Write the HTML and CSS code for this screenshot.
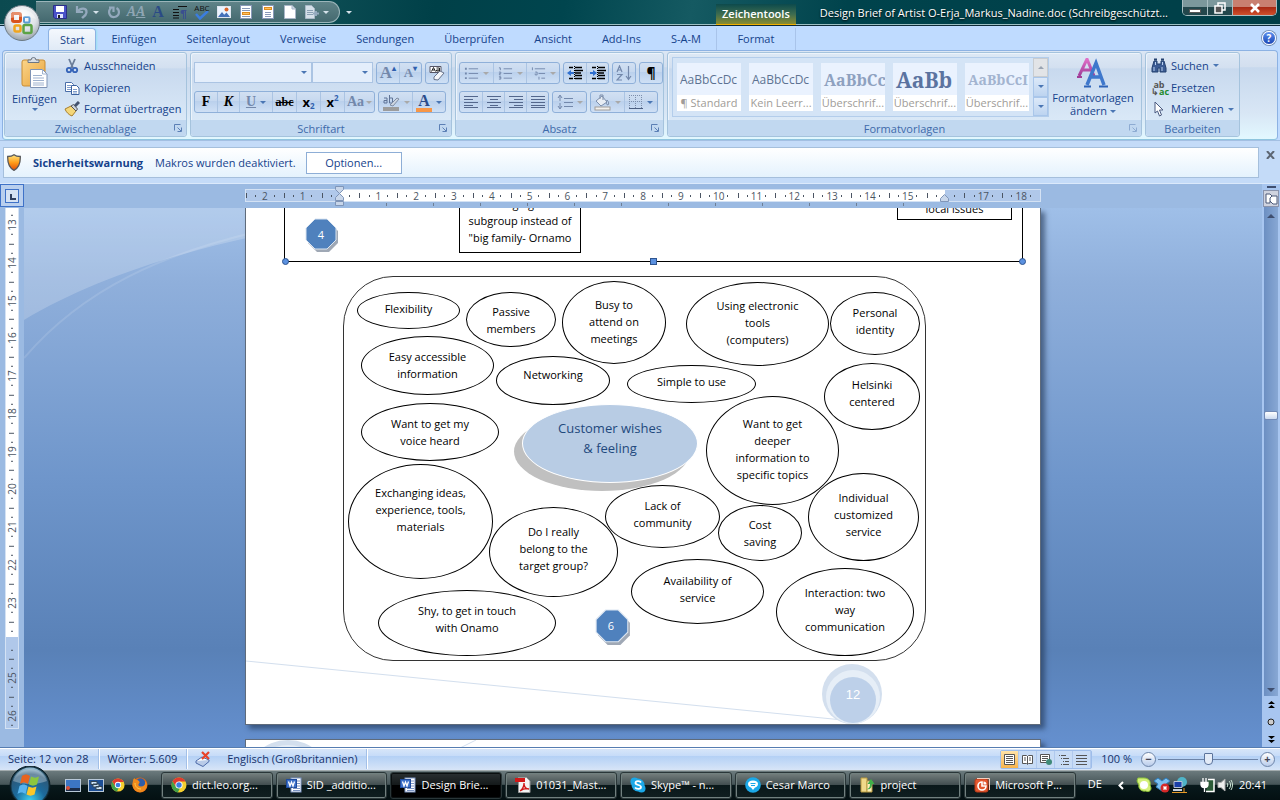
FILE: index.html
```html
<!DOCTYPE html>
<html lang="de">
<head>
    <meta charset="UTF-8">
    <meta name="viewport" content="width=device-width, initial-scale=1.0">
    <title>Design Brief of Artist O-Erja_Markus_Nadine.doc</title>
    <link rel="stylesheet" href="styles.css">
</head>
<body>
    <!-- shared icons -->
    <svg class="defs" width="0" height="0" aria-hidden="true">
        <defs>
            <linearGradient id="gBlue" x1="0" y1="0" x2="0" y2="1"><stop offset="0" stop-color="#9cc4f5"/><stop offset="1" stop-color="#2d63b8"/></linearGradient>
            <linearGradient id="gPink" x1="0" y1="0" x2="0" y2="1"><stop offset="0" stop-color="#e070c8"/><stop offset="1" stop-color="#a03c98"/></linearGradient>
            <linearGradient id="gClip" x1="0" y1="0" x2="1" y2="1"><stop offset="0" stop-color="#fbd58a"/><stop offset="1" stop-color="#e8a33c"/></linearGradient>
            <linearGradient id="gShield" x1="0" y1="0" x2="0" y2="1"><stop offset="0" stop-color="#ffe680"/><stop offset=".5" stop-color="#ff9e1b"/><stop offset="1" stop-color="#e04a08"/></linearGradient>
            <radialGradient id="gOffice" cx=".5" cy=".3" r=".75"><stop offset="0" stop-color="#ffffff"/><stop offset=".55" stop-color="#dfe3e8"/><stop offset="1" stop-color="#8d979f"/></radialGradient>
            <radialGradient id="gOrb" cx=".5" cy=".9" r=".9"><stop offset="0" stop-color="#3fd0f0"/><stop offset=".45" stop-color="#1c6a9c"/><stop offset=".8" stop-color="#2c5878"/><stop offset="1" stop-color="#9ec4d8"/></radialGradient>
        </defs>
        <symbol id="i-word" viewBox="0 0 16 16">
            <rect x="5" y="1" width="10" height="14" fill="#fff" stroke="#7c95c4"/>
            <path d="M11 4h3M11 6.500h3M11 9h3M7 11.500h7M7 13.500h7" stroke="#7c95c4"/>
            <rect x=".5" y="2.500" width="10" height="8" fill="#3b6fc8" stroke="#1f4b9c"/>
            <path d="M2.500 4.500l1.500 4.500 1.500-4 1.500 4 1.500-4.500" fill="none" stroke="#fff" stroke-width="1.300"/>
        </symbol>
        <symbol id="i-chrome" viewBox="0 0 16 16">
            <circle cx="8" cy="8" r="7.500" fill="#f5cf2e"/>
            <path d="M8 .5A7.500 7.500 0 0 1 14.600 4.500H8L4.900 9.700 1.500 4.300A7.500 7.500 0 0 1 8 .5z" fill="#df3b2f"/>
            <path d="M1.500 4.300L4.900 9.700l3.900 1.800-2 4A7.500 7.500 0 0 1 1.500 4.300z" fill="#43a047"/>
            <circle cx="8" cy="8" r="3.600" fill="#fff"/><circle cx="8" cy="8" r="2.700" fill="#3b7de0"/>
        </symbol>
        <symbol id="i-firefox" viewBox="0 0 16 16">
            <circle cx="8" cy="8" r="7.500" fill="#e66a12"/>
            <circle cx="8.500" cy="6" r="4.700" fill="#2f5da8"/>
            <path d="M1 4C1 2 2 1.500 2.500 1c.5 1.500 1.500 2 3 2C7 4 8.500 5 7 6.500c-1 1-1 3 2 3s5-2 4-5c2 1 2.500 4 1 7-3 5-10 5-13-1C0 8 .5 6 1 4z" fill="#f08a1c"/>
            <path d="M3 6c0 4 3 6 6 6" fill="none" stroke="#ffd04a"/>
        </symbol>
        <symbol id="i-list" viewBox="0 0 16 14">
            <path d="M5 2.500h10M5 7.500h10M5 12.500h10" stroke="currentColor"/><path d="M1 2.500h2M1 7.500h2M1 12.500h2" stroke="currentColor" stroke-width="2"/>
        </symbol>
        <symbol id="i-numlist" viewBox="0 0 16 14">
            <path d="M6 2.500h9M6 7.500h9M6 12.500h9" stroke="currentColor"/>
            <path d="M1 1.500h1.500V4M1 6h2v1.500H1.500V9H3M1 11h2v2.500H1M1.500 12H3" fill="none" stroke="currentColor"/>
        </symbol>
        <symbol id="i-multilist" viewBox="0 0 16 14">
            <path d="M4 2.500h11M8 7.500h7M11 12.500h4M1.500 1v3M4.500 6h2v3h-2V7.500M8.500 11v3" fill="none" stroke="currentColor"/>
        </symbol>
        <symbol id="i-outdent" viewBox="0 0 16 14">
            <path d="M2 1.500h4M8 1.500h7M2 12.500h4M8 12.500h7M8 4.500h8M8 7h6M8 9.500h7" stroke="#000" stroke-width="1.500"/><path d="M7.500 0v14" stroke="#000" stroke-dasharray="1 1"/><path d="M0 7l4-3v2h3v2H4v2z" fill="#2f6fd0"/>
        </symbol>
        <symbol id="i-indent" viewBox="0 0 16 14">
            <path d="M2 1.500h4M8 1.500h7M2 12.500h4M8 12.500h7M8 4.500h8M8 7h6M8 9.500h7" stroke="#000" stroke-width="1.500"/><path d="M7.500 0v14" stroke="#000" stroke-dasharray="1 1"/><path d="M7 7L3 4v2H0v2h3v2z" fill="#2f6fd0"/>
        </symbol>
        <symbol id="i-left" viewBox="0 0 14 12"><path d="M0 .5h14M0 3.500h9M0 6.500h14M0 9.500h9M0 11.500h14" stroke="currentColor"/></symbol>
        <symbol id="i-center" viewBox="0 0 14 12"><path d="M0 .5h14M3 3.500h8M0 6.500h14M3 9.500h8M0 11.500h14" stroke="currentColor"/></symbol>
        <symbol id="i-right" viewBox="0 0 14 12"><path d="M0 .5h14M5 3.500h9M0 6.500h14M5 9.500h9M0 11.500h14" stroke="currentColor"/></symbol>
        <symbol id="i-justify" viewBox="0 0 14 12"><path d="M0 .5h14M0 3.500h14M0 6.500h14M0 9.500h14M0 11.500h14" stroke="currentColor"/></symbol>
        <symbol id="i-launch" viewBox="0 0 8 8"><path d="M.5 6.500v-6h6M3.500 4v-.5M4 4l3 3M7.500 3.500v4h-4" fill="none" stroke="currentColor"/></symbol>
    </svg>

    <header class="titlebar">
        <button class="office" aria-label="Office">
            <svg width="36" height="36" viewBox="0 0 36 36">
                <circle cx="18" cy="18" r="17.500" fill="url(#gOffice)" stroke="#6b7a84"/>
                <g fill="none" stroke-width="3">
                    <rect x="8.500" y="8.500" width="8" height="8" rx="1.500" stroke="#d9531e"/>
                    <rect x="20" y="12" width="5.500" height="5.500" rx="1" stroke="#5b9bd5" stroke-width="2"/>
                    <rect x="10.500" y="20.500" width="6" height="6" rx="1.500" stroke="#f0a51e" stroke-width="2.500"/>
                    <rect x="19.500" y="20" width="8" height="8" rx="1.500" stroke="#5ba345" stroke-width="2.500"/>
                </g>
                <path d="M4 14a15 15 0 0 1 28 0c-8-3-20-3-28 0z" fill="#fff" opacity=".35"/>
            </svg>
        </button>
        <div class="qat">
            <button aria-label="Speichern"><svg width="14" height="14" viewBox="0 0 14 14"><path d="M.5.5h13v13H2l-1.500-1.500z" fill="#4a52c8" stroke="#2b2f86"/><rect x="3" y="1" width="8" height="6" fill="#fff"/><rect x="4" y="9" width="6" height="4" fill="#dfe3ff"/><rect x="5" y="10" width="2" height="3" fill="#222"/></svg></button>
            <button class="wide" aria-label="Rückgängig"><svg width="14" height="14" viewBox="0 0 14 14"><path d="M2 1v6h6M2.500 6.500C6 2 12 3 11.500 7.500 11 11 8 12 7 13" fill="none" stroke="#94a9bd" stroke-width="2.200"/></svg><i class="arrow pale"></i></button>
            <button aria-label="Wiederholen"><svg width="14" height="14" viewBox="0 0 14 14"><path d="M4 3C0 7 3 12.500 7.500 12 13 11 13 5 9.500 3M2 2.500h4.500V7" fill="none" stroke="#94a9bd" stroke-width="2.200"/></svg></button>
            <button class="serif dim" aria-label="Formatvorlage">A<u>A</u></button>
            <button class="serif navy" aria-label="Schriftart">A</button>
            <button aria-label="Absatz"><svg width="14" height="14" viewBox="0 0 14 14"><path d="M5 1.500h9M0 4.500h6M0 7.500h6M0 10.500h6M0 13h6" stroke="#111"/><path d="M10.500 5v9M12.500 5v9M9 5.500h4.500" stroke="#3a4f8f"/><circle cx="9.500" cy="7" r="2" fill="#3a4f8f"/></svg></button>
            <button class="abc" aria-label="Rechtschreibung"><span>ABC</span><svg width="14" height="9" viewBox="0 0 14 9"><path d="M1 3l4 4.500L13 0" fill="none" stroke="#3b7de0" stroke-width="2.500"/></svg></button>
            <button aria-label="Grafik"><svg width="14" height="14" viewBox="0 0 14 14"><rect x=".5" y="1.500" width="13" height="11" fill="#eaf3ff" stroke="#dfe6ef"/><path d="M1 12l4-5 4 5zM7 10l2.500-2.500L13 12H8z" fill="#4470b8"/><circle cx="9.500" cy="4.500" r="2" fill="#d9642a"/></svg></button>
            <button aria-label="Kopfzeile"><svg width="12" height="14" viewBox="0 0 12 14"><rect x=".5" y=".5" width="11" height="13" fill="#fff" stroke="#8898b8"/><path d="M2 3.500h8M2 5.500h8M2 11.500h8" stroke="#8898b8"/><rect x="2.500" y="7.500" width="7" height="2" fill="#ffc060" stroke="#e08c20"/></svg></button>
            <button aria-label="Fußzeile"><svg width="12" height="14" viewBox="0 0 12 14"><rect x=".5" y=".5" width="11" height="13" fill="#fff" stroke="#8898b8"/><rect x="2.500" y="2.500" width="7" height="2" fill="#ffc060" stroke="#e08c20"/><path d="M3 7.500h6M3 9.500h6M3 11.500h6" stroke="#8898b8"/></svg></button>
            <button aria-label="Neu"><svg width="12" height="14" viewBox="0 0 12 14"><path d="M.5.500h7.500l3.500 3.500v9.500H.5z" fill="#fff" stroke="#a9b6c8"/><path d="M8 .5V4h3.500" fill="#cdd8e6" stroke="#a9b6c8"/></svg></button>
            <button class="wide" aria-label="Umbruch"><svg width="14" height="14" viewBox="0 0 14 14"><path d="M.5.500h6l3 3v10h-9z" fill="#d5dfe8" stroke="#a9b9c8"/><path d="M2 5.500h6M2 7.500h6M2 9.500h6" stroke="#8aa0b4"/><path d="M8 8.500h6M11 6v5" stroke="#94a9bd" stroke-width="2"/></svg><i class="arrow pale"></i></button>
        </div>
        <button class="customize" aria-label="Symbolleiste anpassen"><i class="arrow pale"></i></button>
        <h1 class="doc-title">Design Brief of Artist O-Erja_Markus_Nadine.doc (Schreibgeschützt...</h1>
        <div class="window-buttons">
            <button aria-label="Minimieren"><svg width="12" height="12" viewBox="0 0 12 12"><rect x=".5" y="7.500" width="11" height="3" fill="#fff" stroke="#555"/></svg></button>
            <button aria-label="Wiederherstellen"><svg width="12" height="12" viewBox="0 0 12 12"><rect x="4" y="1" width="7" height="7" fill="none" stroke="#fff" stroke-width="1.500"/><rect x="1" y="4" width="7" height="7" fill="#555" stroke="#fff" stroke-width="1.500"/></svg></button>
            <button class="close" aria-label="Schließen"><svg width="12" height="10" viewBox="0 0 12 10"><path d="M2 1l8 8M10 1L2 9" stroke="#fff" stroke-width="2.600"/></svg></button>
        </div>
    </header>

    <nav class="tabs">
        <button class="tab active">Start</button>
        <button class="tab">Einfügen</button>
        <button class="tab">Seitenlayout</button>
        <button class="tab">Verweise</button>
        <button class="tab">Sendungen</button>
        <button class="tab">Überprüfen</button>
        <button class="tab">Ansicht</button>
        <button class="tab">Add-Ins</button>
        <button class="tab">S-A-M</button>
        <button class="tab context"><span class="context-title">Zeichentools</span>Format</button>
        <button class="help" aria-label="Hilfe">?</button>
    </nav>

    <section class="ribbon">
        <div class="group clipboard">
            <div class="group-body">
                <button class="big">
                    <svg width="28" height="32" viewBox="0 0 28 32"><rect x="1" y="3" width="23" height="26" rx="2" fill="url(#gClip)" stroke="#c98d34"/><path d="M7 5.500V3h3a2.500 2.500 0 0 1 5 0h3v2.500z" fill="#d8dde4" stroke="#6b7684"/><path d="M9.500 12.500h12l4.500 4.500v13.500H9.500z" fill="#fff" stroke="#7f93b5"/><path d="M21.500 12.500V17H26M12 18.500h9M12 21h11M12 23.500h11M12 26h11M12 28h11" fill="none" stroke="#9fb2cf"/></svg>
                    <span>Einfügen</span><i class="arrow"></i>
                </button>
                <div class="stack">
                    <button class="small"><svg width="16" height="16" viewBox="0 0 16 16"><path d="M5 1l4 9M11 1L7 10" stroke="#6b7d99" stroke-width="1.800"/><circle cx="5" cy="12" r="2.200" fill="none" stroke="#3563b8" stroke-width="1.800"/><circle cx="11" cy="12" r="2.200" fill="none" stroke="#3563b8" stroke-width="1.800"/></svg>Ausschneiden</button>
                    <button class="small"><svg width="16" height="16" viewBox="0 0 16 16"><path d="M1.500 2.500h6l2 2v7h-8z" fill="#fff" stroke="#4a6ea8"/><path d="M3 5.500h4M3 7.500h4M3 9.500h4" stroke="#7f9dcc"/><path d="M7.500 5.500h5l2.500 2.500v6.500H7.500z" fill="#fff" stroke="#3b62a0"/><path d="M9 9.500h4M9 11.500h4M9 13h4" stroke="#7f9dcc"/></svg>Kopieren</button>
                    <button class="small"><svg width="16" height="16" viewBox="0 0 16 16"><path d="M1 8l6-3 5 5-4 5C5 14 2 11 1 8z" fill="#f4d77a" stroke="#a87e2b"/><path d="M7 5l5 5 1.500-2L9.500 3.500z" fill="#cfd6df" stroke="#555"/><path d="M11 5l4-4" stroke="#44536e" stroke-width="3"/></svg>Format übertragen</button>
                </div>
            </div>
            <div class="group-title">Zwischenablage<svg width="8" height="8"><use href="#i-launch"/></svg></div>
        </div>

        <div class="group font">
            <div class="group-body rows">
                <div class="row">
                    <span class="combos">
                        <span class="combo family"><select aria-label="Schriftart"><option></option></select></span>
                        <span class="combo size"><select aria-label="Schriftgrad"><option></option></select></span>
                    </span>
                    <span class="btns"><button class="serif gray big-a" aria-label="Vergrößern">A<sup>▴</sup></button><button class="serif gray small-a" aria-label="Verkleinern">A<sup>▾</sup></button></span>
                    <span class="btns"><button aria-label="Formatierung löschen"><svg width="18" height="16" viewBox="0 0 18 16"><path d="M2 1.500h11v6H2z" fill="#fff" stroke="#556"/><path d="M3.500 6.500l2-4 2 4M4.500 5h2M8.500 3h3v3h-3V5h3" fill="none" stroke="#222"/><path d="M6 12l6-6 4 2-6 7-4-.5z" fill="#f4f6fa" stroke="#66728a"/></svg></button></span>
                </div>
                <div class="row">
                    <span class="btns">
                        <button class="serif"><b>F</b></button><button class="serif"><b><i>K</i></b></button><button class="serif gray split"><u>U</u><i class="arrow"></i></button><button class="serif strike"><s>abc</s></button><button class="sans">x<sub>2</sub></button><button class="sans">x<sup>2</sup></button><button class="serif gray aa">Aa<i class="arrow off"></i></button>
                    </span>
                    <span class="btns">
                        <button class="split" aria-label="Hervorheben"><svg width="18" height="17" viewBox="0 0 18 17"><path d="M2 4h3v5H2V6.500h3M7.500 1v8h3V4h-3" fill="none" stroke="#5f7396"/><path d="M8 11l7-7 2 1-6 7z" fill="#cdd5e0" stroke="#7f8da5"/><rect x="1" y="13" width="16" height="4" fill="#9c9c9c"/></svg><i class="arrow off"></i></button><button class="split color" aria-label="Schriftfarbe"><span class="serif">A</span><i class="arrow"></i></button>
                    </span>
                </div>
            </div>
            <div class="group-title">Schriftart<svg width="8" height="8"><use href="#i-launch"/></svg></div>
        </div>

        <div class="group para">
            <div class="group-body rows">
                <div class="row">
                    <span class="btns gray"><button class="split" aria-label="Aufzählung"><svg width="15" height="14"><use href="#i-list"/></svg><i class="arrow off"></i></button><button class="split" aria-label="Nummerierung"><svg width="15" height="14"><use href="#i-numlist"/></svg><i class="arrow off"></i></button><button class="split" aria-label="Liste"><svg width="15" height="14"><use href="#i-multilist"/></svg><i class="arrow off"></i></button></span>
                    <span class="btns"><button aria-label="Einzug verkleinern"><svg width="16" height="14"><use href="#i-outdent"/></svg></button><button aria-label="Einzug vergrößern"><svg width="16" height="14"><use href="#i-indent"/></svg></button></span>
                    <span class="btns gray"><button aria-label="Sortieren"><svg width="16" height="16" viewBox="0 0 16 16"><path d="M1 7l2.500-6L6 7M2 5h3M1 9.500h5L1 15h5M12.500 1v13M10 11l2.500 3.500L15 11" fill="none" stroke="currentColor" stroke-width="1.200"/></svg></button></span>
                    <span class="btns"><button class="pilcrow">¶</button></span>
                </div>
                <div class="row">
                    <span class="btns navy-ic"><button aria-label="Linksbündig"><svg width="14" height="12"><use href="#i-left"/></svg></button><button aria-label="Zentriert"><svg width="14" height="12"><use href="#i-center"/></svg></button><button aria-label="Rechtsbündig"><svg width="14" height="12"><use href="#i-right"/></svg></button><button aria-label="Blocksatz"><svg width="14" height="12"><use href="#i-justify"/></svg></button></span>
                    <span class="btns gray"><button class="split" aria-label="Zeilenabstand"><svg width="16" height="16" viewBox="0 0 16 16"><path d="M7 4.500h9M7 8.500h9M7 12.500h9M3 2v5M3 9v5M1 4l2-3 2 3M1 12l2 3 2-3" fill="none" stroke="currentColor"/></svg><i class="arrow off"></i></button></span>
                    <span class="btns gray"><button class="split" aria-label="Schattierung"><svg width="17" height="17" viewBox="0 0 17 17"><path d="M2 7l6-5 5 6-6 4z" fill="#e8edf4" stroke="#7c8eab"/><path d="M13 6c2 2 2 4 1 5-2 0-2-3-1-5zM6 5V1h3v5" fill="none" stroke="#7c8eab"/><rect x="1" y="13" width="15" height="3" fill="#f3f1ee" stroke="#a09c98"/></svg><i class="arrow off"></i></button><button class="split" aria-label="Rahmen"><svg width="14" height="14" viewBox="0 0 14 14"><path d="M.5 0v13M6.500 0v13M12.500 0v13M0 .5h13M0 6.500h13" stroke="#7c8eab" stroke-dasharray="1 1"/><path d="M0 13.500h14" stroke="#4b5f82"/></svg><i class="arrow"></i></button></span>
                </div>
            </div>
            <div class="group-title">Absatz<svg width="8" height="8"><use href="#i-launch"/></svg></div>
        </div>

        <div class="group styles">
            <div class="group-body">
                <div class="gallery">
                    <button class="style"><span class="sample">AaBbCcDc</span><span class="name">¶ Standard</span></button>
                    <button class="style"><span class="sample">AaBbCcDc</span><span class="name">Kein Leerr...</span></button>
                    <button class="style h1"><span class="sample">AaBbCc</span><span class="name">Überschrif...</span></button>
                    <button class="style h2"><span class="sample">AaBb</span><span class="name">Überschrif...</span></button>
                    <button class="style h3"><span class="sample">AaBbCcI</span><span class="name">Überschrif...</span></button>
                    <div class="scroller"><button class="off" aria-label="Hoch"><i class="arrow up"></i></button><button aria-label="Runter"><i class="arrow"></i></button><button class="more" aria-label="Weitere"><i class="arrow"></i></button></div>
                </div>
                <button class="big change">
                    <svg width="32" height="30" viewBox="0 0 32 30"><path d="M2 18L10 1l7 17M5 12h9" fill="none" stroke="url(#gPink)" stroke-width="3"/><path d="M0 19h5M13 19h5" stroke="#a03c98" stroke-width="2"/><path d="M10 27L19 5l8 22M13 19h10" fill="none" stroke="#3f78cc" stroke-width="3.500"/><path d="M7 28.500h7M22 28.500h9" stroke="#2d63b8" stroke-width="2"/></svg>
                    <span>Formatvorlagen<br>ändern <i class="arrow"></i></span>
                </button>
            </div>
            <div class="group-title">Formatvorlagen<svg class="off" width="8" height="8"><use href="#i-launch"/></svg></div>
        </div>

        <div class="group edit">
            <div class="group-body">
                <div class="stack">
                    <button class="small"><svg width="16" height="16" viewBox="0 0 16 16"><path d="M3 3h3v3h4V3h3l2 7v4H9v-4H7v4H1v-4z" fill="#3c5c94" stroke="#23406f"/><path d="M3 1.500h3M10 1.500h3" stroke="#23406f" stroke-width="2"/><path d="M3 9v4M11 9v4M4.500 4v3M11.500 4v3" stroke="#b8d0f0"/></svg>Suchen <i class="arrow"></i></button>
                    <button class="small"><span class="replace"><b>ab</b><b>↳<em>ac</em></b></span>Ersetzen</button>
                    <button class="small"><svg width="16" height="16" viewBox="0 0 16 16"><path d="M4 1l8 8H8.500l2 5-2 1-2-5L4 12z" fill="#fff" stroke="#4a5a80"/></svg>Markieren <i class="arrow"></i></button>
                </div>
            </div>
            <div class="group-title">Bearbeiten</div>
        </div>
    </section>

    <section class="message">
        <div class="message-box">
            <svg width="14" height="17" viewBox="0 0 14 17"><path d="M7 .7c2 1.600 4 1.800 6.300 1.800.2 6-.8 11-6.300 13.800C1.500 13.500.5 8.500.7 2.500 3 2.500 5 2.300 7 .7z" fill="url(#gShield)" stroke="#58595c" stroke-width="1.300"/></svg>
            <strong>Sicherheitswarnung</strong>
            <span>Makros wurden deaktiviert.</span>
            <button>Optionen...</button>
        </div>
        <button class="message-close" aria-label="Schließen"><svg width="9" height="8" viewBox="0 0 9 8"><path d="M1 0l7 8M8 0L1 8" stroke="#5d6673" stroke-width="2"/></svg></button>
    </section>

    <main class="editor">
        <div class="left">
            <button class="tabstop" aria-label="Tabulator"><i></i></button>
            <div class="vruler">
                <div class="vcells"><span>13</span><span>14</span><span>15</span><span>16</span><span>17</span><span>18</span><span>19</span><span>20</span><span>21</span><span>22</span><span>23</span><span></span><span>25</span><span>26</span></div>
            </div>
        </div>
        <div class="center">
            <div class="ruler-row">
                <div class="hruler">
                    <span>2</span><span>1</span><span></span><span>1</span><span>2</span><span>3</span><span>4</span><span>5</span><span>6</span><span>7</span><span>8</span><span>9</span><span>10</span><span>11</span><span>12</span><span>13</span><span>14</span><span>15</span><span></span><span>17</span><span>18</span>
                    <svg class="marker start" width="9" height="20" viewBox="0 0 9 20"><path d="M.5.500h8v3l-4 4-4-4zM.5 14.500v-3l4-4 4 4v3zM.5 15.500h8v4h-8z" fill="#c8d6ea" stroke="#7f95b8"/></svg>
                    <svg class="marker end" width="9" height="8" viewBox="0 0 9 8"><path d="M.5 7.500v-3l4-4 4 4v3z" fill="#c8d6ea" stroke="#7f95b8"/></svg>
                </div>
                <div class="stops"></div>
            </div>
            <div class="workspace">
                <svg class="swoosh" width="600" height="500" viewBox="0 0 600 500">
                    <path d="M0 0h500C320 0 120 40 0 112z" fill="#fff" opacity=".2"/>
                    <path d="M0 150C60 80 140 45 240 22" fill="none" stroke="#fff" opacity=".12" stroke-width="2"/>
                </svg>
                <article class="page">
                    <svg class="art" width="794" height="516" viewBox="0 0 794 516">
                        <path d="M0 453l607 60" stroke="#d3dfee"/>
                        <circle cx="606" cy="486" r="30" fill="#d3dfee"/><circle cx="607" cy="489" r="27" fill="#e6eef7"/><circle cx="607" cy="492" r="23" fill="#bdd0e9"/>
                        <text x="607" y="491" fill="#fff" text-anchor="middle">12</text>
                    </svg>
                    <div class="drawing"><i class="handle h-left"></i><i class="handle h-mid"></i><i class="handle h-right"></i></div>
                    <div class="note n1">belonging to a<br>subgroup instead of<br>"big family- Ornamo</div>
                    <div class="note n2">local issues</div>
                    <div class="badge four"><svg width="34" height="36" viewBox="0 0 34 36"><path d="M12 4h12l9 9v12l-9 9H12l-9-9V13z" fill="#9fa8b5"/><path d="M10 1h12l9 9v12l-9 9H10l-9-9V10z" fill="#4f81bd" stroke="#dbe5f1"/></svg><span>4</span></div>
                    <div class="cloud">
                        <div class="bubble flexibility">Flexibility</div>
                        <div class="bubble passive">Passive<br>members</div>
                        <div class="bubble busy">Busy to<br>attend on<br>meetings</div>
                        <div class="bubble tools">Using electronic<br>tools<br>(computers)</div>
                        <div class="bubble personal">Personal<br>identity</div>
                        <div class="bubble easy">Easy accessible<br>information</div>
                        <div class="bubble networking">Networking</div>
                        <div class="bubble simple">Simple to use</div>
                        <div class="bubble helsinki">Helsinki<br>centered</div>
                        <div class="bubble voice">Want to get my<br>voice heard</div>
                        <div class="bubble main">Customer wishes<br>&amp; feeling</div>
                        <div class="bubble deeper">Want to get<br>deeper<br>information to<br>specific topics</div>
                        <div class="bubble individual">Individual<br>customized<br>service</div>
                        <div class="bubble exchange">Exchanging ideas,<br>experience, tools,<br>materials</div>
                        <div class="bubble belong">Do I really<br>belong to the<br>target group?</div>
                        <div class="bubble lack">Lack of<br>community</div>
                        <div class="bubble cost">Cost<br>saving</div>
                        <div class="bubble available">Availability of<br>service</div>
                        <div class="bubble interaction">Interaction: two<br>way<br>communication</div>
                        <div class="bubble shy">Shy, to get in touch<br>with Onamo</div>
                        <div class="badge six"><svg width="36" height="38" viewBox="0 0 34 36"><path d="M12 4h12l9 9v12l-9 9H12l-9-9V13z" fill="#9fa8b5"/><path d="M10 1h12l9 9v12l-9 9H10l-9-9V10z" fill="#4f81bd" stroke="#dbe5f1"/></svg><span>6</span></div>
                    </div>
                </article>
                <article class="page next">
                    <svg class="art" width="794" height="60" viewBox="0 0 794 60"><circle cx="42" cy="44" r="44" fill="#d3dfee"/><circle cx="42" cy="44" r="39" fill="#e6eef7"/><path d="M190 20L230 0" stroke="#d3dfee"/></svg>
                </article>
            </div>
        </div>
        <div class="scrollbar">
            <i class="splitter"></i>
            <button class="ruler-toggle" aria-label="Lineal"><svg width="13" height="13" viewBox="0 0 13 13"><path d="M1 2h4l2 2-2 2v5H1zM6 4h6v8H8l-3-3" fill="#fff" stroke="#4a5878"/></svg></button>
            <div class="track"><i class="arrow up"></i><i class="thumb"></i><i class="arrow"></i></div>
            <button class="nav" aria-label="Vorherige Seite"><svg width="7" height="8" viewBox="0 0 7 8"><path d="M3.500 0L7 3H0zM3.500 4L7 7H0z"/></svg></button>
            <button class="nav" aria-label="Browseobjekt"><svg width="8" height="8" viewBox="0 0 8 8"><circle cx="4" cy="4" r="3" fill="#ccc" stroke="#222"/></svg></button>
            <button class="nav" aria-label="Nächste Seite"><svg width="7" height="8" viewBox="0 0 7 8"><path d="M3.500 4L7 1H0zM3.500 8L7 5H0z"/></svg></button>
        </div>
    </main>

    <footer class="status">
        <span class="cell">Seite: 12 von 28</span>
        <span class="cell">Wörter: 5.609</span>
        <span class="cell lang"><svg width="16" height="16" viewBox="0 0 16 16"><path d="M1 10l6-4 7 3-6 5z" fill="#fff" stroke="#4c6aa8"/><path d="M1 10v2l7 3.500 6-5V9" fill="#b9cbe8" stroke="#4c6aa8"/><path d="M7 1l7 7M14 1L7 8" stroke="#e8432a" stroke-width="2.200"/></svg>Englisch (Großbritannien)</span>
        <div class="views">
            <button class="on" aria-label="Seitenlayout"><svg width="11" height="11" viewBox="0 0 11 11"><path d="M.5.500h10v10H.5z" fill="#fff" stroke="#555"/><path d="M2 2.500h7M2 4.500h7M2 6.500h7M2 8.500h7" stroke="#555"/></svg></button>
            <button aria-label="Vollbild"><svg width="11" height="11" viewBox="0 0 11 11"><path d="M.5 1.500h4l1 1 1-1h4v8h-4l-1 1-1-1h-4zM5.500 2v8M2 4h2M2 6h2M7 4h2M7 6h2" fill="#fff" stroke="#555"/></svg></button>
            <button aria-label="Weblayout"><svg width="12" height="11" viewBox="0 0 12 11"><path d="M.5.500h9v8h-9z" fill="#fff" stroke="#555"/><path d="M2 2.500h6M2 4.500h6M2 6.500h4" stroke="#555"/><circle cx="9" cy="8" r="3" fill="#3f8a78"/></svg></button>
            <button aria-label="Gliederung"><svg width="11" height="11" viewBox="0 0 11 11"><path d="M1 1.500h1M3 1.500h5M3 4.500h1M5 4.500h6M5 7.500h1M7 7.500h4M3 10.500h1M5 10.500h6" stroke="#555"/></svg></button>
            <button aria-label="Entwurf"><svg width="11" height="11" viewBox="0 0 11 11"><path d="M0 1.500h11M0 4.500h11M0 7.500h11M0 10.500h11" stroke="#555"/></svg></button>
        </div>
        <label class="zoom" for="zoom">100 %</label>
        <button class="round" aria-label="Verkleinern">−</button>
        <input type="range" id="zoom" min="0" max="200" value="100">
        <button class="round" aria-label="Vergrößern">+</button>
    </footer>

    <footer class="taskbar">
        <button class="orb" aria-label="Start"><svg width="42" height="34" viewBox="0 0 42 34"><circle cx="21" cy="20" r="20" fill="#163848" stroke="#0a1c24"/><circle cx="21" cy="20" r="18.500" fill="url(#gOrb)"/><path d="M4 15a18 18 0 0 1 34 0c-10 4-24 4-34 0z" fill="#fff" opacity=".3"/><path d="M13 10c3-2 5-2 8 0l-2 8c-3-2-5-2-8 0z" fill="#e8641f"/><path d="M22 10.500c3 1.500 5 1.500 8 0l-2 8c-3 1.500-5 1.500-8 0z" fill="#8cc63e"/><path d="M10.500 20c3-2 5-2 8 0l-2 8c-3-2-5-2-8 0z" fill="#59b4ee"/><path d="M19.500 20.500c3 1.500 5 1.500 8 0l-2 8c-3 1.500-5 1.500-8 0z" fill="#fcc729"/></svg></button>
        <div class="quick">
            <button aria-label="Desktop"><svg width="16" height="13" viewBox="0 0 16 13"><rect x=".5" y=".5" width="15" height="12" fill="#3c76c4" stroke="#b8c8d8"/><path d="M1 10.500h14" stroke="#1b2c48" stroke-width="3"/><circle cx="3" cy="9" r="2" fill="#d8503a"/></svg></button>
            <button aria-label="Fenster"><svg width="16" height="13" viewBox="0 0 16 13"><rect x=".5" y=".5" width="15" height="12" fill="#1d4f96" stroke="#b8c8d8"/><path d="M3 2.500h6v3H3zM5 5h6v3H5zM8 7.500h6v3H8z" fill="#cfe4f8" stroke="#345"/></svg></button>
            <button aria-label="Chrome"><svg width="14" height="14"><use href="#i-chrome"/></svg></button>
            <button aria-label="Firefox"><svg width="16" height="16"><use href="#i-firefox"/></svg></button>
        </div>
        <div class="tasks">
            <button><svg width="16" height="16"><use href="#i-chrome"/></svg><span>dict.leo.org...</span></button>
            <button><svg width="16" height="16"><use href="#i-word"/></svg><span>SID _additio...</span></button>
            <button class="pressed"><svg width="16" height="16"><use href="#i-word"/></svg><span>Design Brie...</span></button>
            <button><svg width="16" height="16" viewBox="0 0 16 16"><path d="M3.500.5h8L15 4v11.500H3.500z" fill="#f4f4f4" stroke="#999"/><rect x="0" y="1" width="10" height="4" fill="#d01818"/><path d="M5 14c3-2 4-5 4-8 0 4 2 6 5 6-3-1-6 0-9 2z" fill="none" stroke="#d01818" stroke-width="1.300"/></svg><span>01031_Mast...</span></button>
            <button><svg width="16" height="16" viewBox="0 0 16 16"><circle cx="8" cy="8" r="6.500" fill="#1ba8e8"/><circle cx="4.500" cy="4.500" r="4" fill="#1ba8e8"/><circle cx="11.500" cy="11.500" r="4" fill="#1ba8e8"/><path d="M11 5.500C10 3.500 5.500 3.500 5.500 6s5.500 1.500 5.500 4-4.500 2.500-6 .5" fill="none" stroke="#fff" stroke-width="1.800"/></svg><span>Skype™ - n...</span></button>
            <button><svg width="16" height="16" viewBox="0 0 16 16"><circle cx="8" cy="8" r="7.800" fill="#1ba8e8"/><path d="M8 3.500c3 0 5 1.300 5 3.500S11 10.500 10 10.500L8 13l-2-2.500C5 10.500 3 9.200 3 7s2-3.500 5-3.500z" fill="#fff"/><path d="M5.500 6.500h5M6 8.500h4" stroke="#1ba8e8"/></svg><span>Cesar Marco</span></button>
            <button><svg width="16" height="16" viewBox="0 0 16 16"><path d="M2 1h6v14H2z" fill="#f0d98a" stroke="#b89a40"/><path d="M8 4h5v11H8z" fill="#fbeeb8" stroke="#b89a40"/><path d="M7 12c3 0 4-2 4-5H8.500L12 2l3.500 5H13c0 4-2 6-6 5z" fill="#3fae49"/></svg><span>project</span></button>
            <button><svg width="16" height="16" viewBox="0 0 16 16"><rect x="1" y="2" width="13" height="13" rx="2" fill="#e4572e" stroke="#b83a18"/><path d="M3 1.500h12.500V13" fill="none" stroke="#f4d0c0"/><path d="M8 5a4 4 0 1 0 4 4H8z" fill="none" stroke="#fff" stroke-width="1.600"/><path d="M9.500 4.500a3 3 0 0 1 3 3h-3z" fill="#fff"/></svg><span>Microsoft P...</span></button>
        </div>
        <span class="input-lang">DE</span>
        <div class="tray">
            <svg width="6" height="9" viewBox="0 0 6 9"><path d="M5 1L1.500 4.500 5 8" fill="none" stroke="#fff" stroke-width="2"/></svg>
            <svg class="first" width="16" height="16" viewBox="0 0 16 16"><path d="M2 1h6c5 0 7 4 6 7l1 3c0 4-4 4-5 3-5 1-8-3-7-6L1 4z" fill="#d4f07a" stroke="#8fc63a"/><circle cx="8" cy="8" r="4" fill="#fff"/></svg>
            <svg width="16" height="16" viewBox="0 0 16 16"><path d="M4 1l4 3 4-3 4 3-4 3 2 3-6 4-6-4 2-3-4-3z" fill="#7cc0f0" stroke="#2f7fc0"/><circle cx="11" cy="11" r="4.500" fill="#d42828"/><path d="M9.500 9.500l3 3M12.500 9.500l-3 3" stroke="#fff" stroke-width="1.500"/></svg>
            <svg width="16" height="16" viewBox="0 0 16 16"><circle cx="10" cy="5" r="5" fill="#4fb4c8"/><path d="M2 4.500h8v6H2z" fill="#1a3fa8" stroke="#b8c4d8"/><path d="M1 13h9" stroke="#c8d0dc" stroke-width="2"/><path d="M0 15.500h15M12 11v4" stroke="#e89a28"/></svg>
            <svg class="first" width="15" height="16" viewBox="0 0 15 16"><path d="M8 2.500h6v12H6" fill="#2c5c38" stroke="#fff" stroke-width="1.500"/><path d="M3 1v4M6 1v4M1 5.500h7v2c0 2-1 3-3.500 3S1 9.500 1 7.500zM4.500 10v5" fill="#fff" stroke="#fff" stroke-width="1.300"/></svg>
            <svg width="16" height="14" viewBox="0 0 16 14"><path d="M1 4.500h3L8 1v12L4 9.500H1z" fill="#eee" stroke="#aaa"/><path d="M10 5c1 1 1 3 0 4M12 3c2 2 2 6 0 8M14 2c2 3 2 7 0 10" fill="none" stroke="#cfe8d8"/></svg>
            <time>20:41</time>
        </div>
    </footer>
</body>
</html>
```
FILE: styles.css
```css
* {
    box-sizing: border-box;
}
body {
    margin: 0;
    height: 100vh;
    display: flex;
    flex-direction: column;
    overflow: hidden;
    font-family: "Open Sans", "Noto Sans", sans-serif;
    font-size: 11px;
    line-height: 16px;
    color: #15428b;
    background: #bfdbff;
}
button {
    margin: 0;
    padding: 0;
    border: 0;
    background: none;
    font: inherit;
    color: inherit;
    white-space: nowrap;
}
svg {
    display: block;
    flex: none;
}
.defs {
    position: absolute;
}
.arrow {
    display: inline-block;
    flex: none;
    border: 3px solid transparent;
    border-top-color: #4a76b4;
    border-bottom: 0;
}
.arrow.up {
    border-top: 0;
    border-bottom: 3px solid #9aa4b2;
}
.arrow.off {
    border-top-color: #a9a9a9;
}
.arrow.pale {
    border-top-color: #d5e2ea;
}
.serif {
    font-family: "Liberation Serif", serif;
}

/* title bar */
.titlebar {
    position: relative;
    display: flex;
    align-items: center;
    height: 26px;
    flex: none;
    background: linear-gradient(100deg, #0b4a50 0%, #15565c 18%, #004048 34%, #00454e 44%, #155a62 54%, #00434c 66%, #003f48 100%);
    border-bottom: 1px solid #0d2a38;
    box-shadow: inset 0 -1px #9cc0c4;
}
.office {
    position: absolute;
    left: 4px;
    top: 5px;
    z-index: 2;
}
.qat {
    display: flex;
    align-items: center;
    gap: 4px;
    height: 22px;
    margin: 1px 0 2px 36px;
    padding: 0 8px 0 15px;
    border: 1px solid #9bb5ba;
    border-left: 0;
    border-radius: 0 11px 11px 0;
    background: linear-gradient(#5f8388, #44696f);
}
.qat button {
    width: 18px;
    height: 18px;
    display: flex;
    align-items: center;
    justify-content: center;
}
.qat .wide {
    width: 28px;
    gap: 4px;
}
.qat .serif {
    font-size: 16px;
    font-weight: bold;
}
.qat .dim {
    color: #8fa6b4;
    font-size: 14px;
    font-style: italic;
}
.qat .navy {
    color: #2a4a86;
}
.qat .abc {
    flex-direction: column;
    font-size: 8px;
    line-height: 7px;
    color: #111;
}
.customize {
    width: 18px;
    display: flex;
    justify-content: center;
}
.customize .arrow {
    box-shadow: 0 -6px 0 -2px #d5e2ea;
}
.doc-title {
    margin: 0 14px 0 auto;
    font-size: 11px;
    font-weight: normal;
    color: #fff;
    text-shadow: 0 1px 2px #000;
}
.window-buttons {
    display: flex;
    align-self: flex-start;
    height: 16px;
    margin-right: 3px;
    border: 1px solid #a9bec2;
    border-top: 0;
    border-radius: 0 0 5px 5px;
    overflow: hidden;
}
.window-buttons button {
    width: 25px;
    display: flex;
    align-items: center;
    justify-content: center;
    border-right: 1px solid #a9bec2;
    background: linear-gradient(#7c989c 50%, #23474c 50%);
}
.window-buttons .close {
    width: 43px;
    border: 0;
    background: linear-gradient(#c98070 50%, #a92a14 50%, #d0502c);
}

/* tabs */
.tabs {
    display: flex;
    height: 24px;
    flex: none;
    padding: 2px 4px 0 48px;
    background: #bfdbff;
}
.tab {
    height: 22px;
    padding: 0 15px;
    line-height: 22px;
}
.tab.active {
    padding: 0 11px;
    border: 1px solid #8db2e3;
    border-bottom: 0;
    border-radius: 4px 4px 0 0;
    background: linear-gradient(#f4f8fd, #e0eaf6);
    line-height: 20px;
    box-shadow: 1px 0 2px #9ae0f0;
}
.tab.context {
    position: relative;
    width: 80px;
    border-left: 1px solid #a9c4ea;
    border-right: 1px solid #a9c4ea;
}
.context-title {
    position: absolute;
    left: -1px;
    right: -1px;
    top: -24px;
    height: 21px;
    line-height: 20px;
    font-weight: 600;
    color: #fff;
    background: linear-gradient(#0d4a4c, #3c6b50 50%, #8a8c30);
    border-bottom: 1px solid #f0b000;
}
.help {
    width: 14px;
    height: 14px;
    margin: 3px 0 0 auto;
    border-radius: 50%;
    border: 1px solid #fff;
    box-shadow: 0 0 0 1px #7a93b8;
    background: linear-gradient(#5d92f0, #1a45b4);
    color: #fff;
    font-weight: bold;
    font-size: 10px;
    line-height: 12px;
}

/* ribbon */
.ribbon {
    display: flex;
    gap: 3px;
    height: 90px;
    flex: none;
    margin: 0 2px;
    padding: 1px 1px 2px;
    border: 1px solid #8db2e3;
    border-bottom-color: #8ec5de;
    border-radius: 4px;
    background: linear-gradient(#dbe6f4, #d3dfef 18%, #c7d8ed 19%, #d8e6f5 70%, #e2f8ff);
}
.group {
    display: flex;
    flex-direction: column;
    border: 1px solid #a5c3dd;
    border-radius: 3px;
    background: linear-gradient(#dde8f5, #d3e0f0 18%, #c8d9ee 19%, #d9e8f7 80%);
    box-shadow: inset 1px 1px #ecf3fb;
}
.group-body {
    flex: 1;
    min-height: 0;
    display: flex;
}
.group-title {
    position: relative;
    flex: none;
    height: 16px;
    line-height: 17px;
    text-align: center;
    color: #3e6aaa;
    background: #c1d8f0;
    border-radius: 0 0 3px 3px;
}
.group-title svg {
    position: absolute;
    right: 4px;
    top: 4px;
    color: #5b7fb5;
}
.group-title .off {
    opacity: .5;
}
.clipboard {
    width: 183px;
}
.font {
    width: 262px;
}
.para {
    width: 209px;
}
.styles {
    width: 475px;
}
.edit {
    width: 95px;
}
.big {
    display: flex;
    flex-direction: column;
    align-items: center;
    width: 59px;
    padding-top: 4px;
}
.big > span {
    margin: 3px 0;
    line-height: 13px;
}
.big .arrow {
    vertical-align: 2px;
}
.stack {
    display: flex;
    flex-direction: column;
    padding-top: 2px;
}
.small {
    display: flex;
    align-items: center;
    gap: 4px;
    height: 22px;
}
.edit .stack {
    padding-left: 5px;
}
.replace {
    display: flex;
    flex-direction: column;
    width: 16px;
    font-size: 9px;
    line-height: 7px;
    color: #555;
}
.replace em {
    font-style: normal;
    color: #1d8a2c;
}
.rows {
    flex-direction: column;
    gap: 7px;
    padding: 9px 3px 0;
}
.row {
    display: flex;
    gap: 3px;
    height: 22px;
}
.para .row:first-child {
    justify-content: space-between;
}
.combos {
    display: flex;
}
.combo {
    position: relative;
    display: flex;
}
.combo::after {
    content: "";
    position: absolute;
    right: 5px;
    top: 9px;
    border: 3px solid transparent;
    border-top-color: #4a76b4;
    border-bottom: 0;
}
.combo select {
    width: 100%;
    height: 21px;
    appearance: none;
    border: 1px solid #abc4e3;
    border-radius: 0;
    background: #e4eefb;
}
.family {
    width: 118px;
}
.size {
    width: 61px;
}
.btns {
    display: flex;
    border: 1px solid #8fb0d9;
    border-radius: 3px;
    background: linear-gradient(#d2e0f2, #c6d8ef 45%, #bad0ec 46%, #cfe0f5);
}
.btns button {
    min-width: 22px;
    display: flex;
    align-items: center;
    justify-content: center;
    gap: 3px;
    border-left: 1px solid #abc4e3;
    color: #000;
    font-size: 14px;
}
.btns button:first-child {
    border-left: 0;
}
.btns .split {
    min-width: 33px;
    gap: 4px;
}
.gray button,
.btns .gray {
    color: #7388ab;
}
.navy-ic button {
    color: #54678c;
}
.big-a {
    font-weight: bold;
}
.btns .big-a {
    font-size: 17px;
    gap: 0;
}
.btns .small-a {
    font-size: 13px;
    font-weight: bold;
    gap: 0;
}
.btns sup,
.btns sub {
    font-size: 8px;
    line-height: 8px;
    color: #2f5fae;
}
.btns sup {
    align-self: flex-start;
    padding-top: 2px;
}
.btns sub {
    align-self: flex-end;
    padding-bottom: 2px;
}
.btns .sans {
    width: 24px;
    gap: 0;
    font-weight: bold;
    font-size: 13px;
}
.font .row:last-child .serif {
    font-weight: bold;
}
.btns .strike {
    width: 24px;
    font-size: 12px;
}
.btns .aa {
    width: 30px;
    gap: 2px;
}
.color span {
    height: 19px;
    width: 16px;
    font-size: 16px;
    font-weight: bold;
    line-height: 16px;
    color: #2b4c8c;
    border-bottom: 4px solid #f79646;
}
.pilcrow {
    font-weight: bold;
}

/* style gallery */
.styles .group-body {
    padding: 4px 4px 2px;
}
.gallery {
    display: flex;
    gap: 8px;
    height: 60px;
    padding-left: 4px;
    border: 1px solid #b3cdeb;
    background: #d4e4f6;
}
.style {
    width: 64px;
    height: 48px;
    margin-top: 5px;
    display: flex;
    flex-direction: column;
    background: #fff;
    text-align: left;
    overflow: hidden;
}
.sample {
    width: 100%;
    height: 32px;
    padding-left: 3px;
    background: #eaf2fe;
    font-size: 12px;
    line-height: 34px;
    color: #5d7292;
    overflow: hidden;
}
.name {
    width: 100%;
    text-align: center;
    color: #a09c98;
}
.h1 .sample,
.h2 .sample,
.h3 .sample {
    font-family: "Noto Serif", "Liberation Serif", serif;
    font-weight: bold;
}
.h1 .sample {
    font-size: 16px;
    color: #8ea1c0;
}
.h2 .sample {
    font-size: 21px;
    color: #5b73a0;
}
.h3 .sample {
    font-size: 14px;
    color: #a3b4d0;
}
.scroller {
    display: flex;
    flex-direction: column;
    width: 15px;
    margin-left: -4px;
}
.scroller button {
    flex: 1;
    display: flex;
    align-items: center;
    justify-content: center;
    border: 1px solid #a9c6ea;
    background: linear-gradient(#dce9f9, #bdd4f0);
}
.scroller .off {
    border-color: #c8ccd0;
    background: #e2e4e7;
}
.scroller .more .arrow {
    box-shadow: 0 -5px 0 -2px #4a76b4;
}
.change {
    width: 90px;
    padding-top: 1px;
}

/* security message */
.message {
    display: flex;
    flex: none;
    height: 44px;
    padding: 6px 4px 5px 3px;
    background: #c4dbf8;
    border-top: 1px solid #a3bfe2;
    border-bottom: 1px solid #dbe9fb;
}
.message-box {
    flex: 1;
    display: flex;
    align-items: center;
    gap: 12px;
    padding-left: 3px;
    border: 1px solid #a5bfdc;
    background: linear-gradient(#fff, #e4f2fd);
}
.message-box button {
    width: 96px;
    height: 22px;
    border: 1px solid #8eaed6;
    background: #fff;
}
.message-box span {
    margin-right: -2px;
}
.message-close {
    align-self: flex-start;
    margin: 4px 1px 0 7px;
}

/* editor */
.editor {
    flex: 1;
    min-height: 0;
    display: flex;
    background: #9bbae2;
}
.left {
    width: 24px;
    flex: none;
    overflow: hidden;
}
.tabstop {
    display: flex;
    align-items: center;
    justify-content: center;
    width: 24px;
    height: 23px;
    border: 1px solid #3f72c8;
    background: #b9cfee;
    margin-bottom: 1px;
}
.tabstop i {
    width: 14px;
    height: 14px;
    border: 1px solid #3f72c8;
    background: linear-gradient(#2f3f5f, #2f3f5f) 4px 4px / 2px 6px no-repeat, linear-gradient(#2f3f5f, #2f3f5f) 4px 8px / 6px 2px no-repeat, #d5e2f4;
}
.vruler {
    width: 14px;
    height: 521px;
    margin-left: 5px;
    overflow: hidden;
    border: 1px solid #d4e2f4;
    border-top: 0;
    background: linear-gradient(#fff 429px, #b0c8ea 429px);
}
.vcells {
    display: flex;
    flex-direction: column;
    height: 529px;
    margin-top: -2px;
}
.vcells span {
    flex: 1;
    width: 12px;
    writing-mode: vertical-rl;
    transform: rotate(180deg);
    text-align: center;
    font-size: 10px;
    line-height: 12px;
    color: #4b5563;
    background:
        linear-gradient(#4b5563, #4b5563) 50% 100% / 5px 1px no-repeat,
        linear-gradient(#4b5563, #4b5563) 50% 25% / 2px 1px no-repeat,
        linear-gradient(#4b5563, #4b5563) 50% 75% / 2px 1px no-repeat;
}
.center {
    flex: 1;
    display: flex;
    flex-direction: column;
    min-width: 0;
}
.ruler-row {
    position: relative;
    z-index: 1;
    flex: none;
    display: flex;
    flex-direction: column;
    align-items: center;
    height: 24px;
    padding-top: 5px;
    background: #9bbae2;
}
.hruler {
    position: relative;
    display: flex;
    width: 796px;
    height: 13px;
    border: 1px solid #d4e2f4;
    background: linear-gradient(90deg, #b0c8ea 94px, #fff 94px, #fff 699px, #b0c8ea 699px);
}
.hruler span {
    flex: 1;
    text-align: center;
    font-size: 10px;
    line-height: 12px;
    color: #4b5563;
    background:
        linear-gradient(#4b5563, #4b5563) 0 50% / 1px 5px no-repeat,
        linear-gradient(#4b5563, #4b5563) 25% 50% / 1px 2px no-repeat,
        linear-gradient(#4b5563, #4b5563) 75% 50% / 1px 2px no-repeat;
}
.marker {
    position: absolute;
}
.marker.start {
    left: 89px;
    top: -4px;
}
.marker.end {
    left: 694px;
    top: 4px;
}
.stops {
    width: 796px;
    height: 3px;
    margin-top: 1px;
    background: repeating-linear-gradient(90deg, #6f7f95 0 1px, transparent 1px 47px) 141px 0 / 521px 3px no-repeat;
}
.workspace {
    position: relative;
    flex: 1;
    display: flex;
    flex-direction: column;
    align-items: center;
    gap: 14px;
    overflow: hidden;
    background: linear-gradient(#9fbfe8, #8fafdb 14%, #6f96cb 50%, #5981b7 82%, #6590cf);
}
.swoosh {
    position: absolute;
    left: 0;
    top: 0;
}
.page {
    position: relative;
    flex: none;
    width: 796px;
    height: 517px;
    background: #fff;
    border: 1px solid #5f6b7b;
    border-top: 0;
    box-shadow: 4px 4px 5px rgba(30, 50, 80, .6);
    line-height: 17px;
    color: #000;
    text-align: center;
}
.page.next {
    height: 60px;
    border-top: 1px solid #5f6b7b;
}
.art {
    position: absolute;
    left: 0;
    top: 0;
}
.art text {
    font: 13px "Liberation Sans", sans-serif;
}
.drawing {
    position: absolute;
    left: 38px;
    top: -2px;
    width: 739px;
    height: 56px;
    border: 1px solid #000;
}
.handle {
    position: absolute;
    bottom: -4px;
    width: 7px;
    height: 7px;
    background: #5b91e0;
    border: 1px solid #2f5590;
    border-radius: 50%;
}
.h-left {
    left: -3px;
}
.h-mid {
    left: 365px;
    border-radius: 0;
}
.h-right {
    right: -4px;
}
.note {
    position: absolute;
    border: 1px solid #000;
    background: #fff;
}
.n1 {
    left: 213px;
    top: -14px;
    width: 122px;
    height: 59px;
}
.n2 {
    left: 651px;
    top: -9px;
    width: 115px;
    height: 21px;
}
.badge {
    position: absolute;
}
.badge span {
    position: absolute;
    left: 0;
    top: 8px;
    width: 32px;
    color: #fff;
}
.four {
    left: 59px;
    top: 10px;
}
.cloud {
    position: absolute;
    left: 97px;
    top: 68px;
    width: 583px;
    height: 385px;
    border: 1px solid #333;
    border-radius: 50px;
}
.six {
    left: 251px;
    top: 332px;
}
.bubble {
    position: absolute;
    border: 1px solid #000;
    border-radius: 50%;
    background: #fff;
}
.flexibility { left: 13px; top: 15px; width: 103px; height: 37px; padding-top: 7px; }
.passive { left: 122px; top: 15px; width: 90px; height: 55px; padding-top: 10px; }
.busy { left: 218px; top: 4px; width: 104px; height: 83px; padding-top: 14px; }
.tools { left: 342px; top: 5px; width: 143px; height: 84px; padding-top: 14px; }
.personal { left: 486px; top: 15px; width: 90px; height: 63px; padding-top: 11px; }
.easy { left: 17px; top: 59px; width: 133px; height: 59px; padding-top: 11px; }
.networking { left: 152px; top: 79px; width: 114px; height: 49px; padding-top: 9px; }
.simple { left: 283px; top: 88px; width: 129px; height: 38px; padding-top: 7px; }
.helsinki { left: 480px; top: 86px; width: 96px; height: 67px; padding-top: 12px; }
.voice { left: 17px; top: 126px; width: 138px; height: 58px; padding-top: 11px; }
.deeper { left: 362px; top: 119px; width: 133px; height: 109px; padding-top: 18px; }
.individual { left: 464px; top: 196px; width: 111px; height: 88px; padding-top: 15px; }
.exchange { left: 4px; top: 187px; width: 145px; height: 115px; padding-top: 19px; }
.belong { left: 145px; top: 230px; width: 129px; height: 90px; padding-top: 15px; }
.lack { left: 261px; top: 208px; width: 115px; height: 63px; padding-top: 11px; }
.cost { left: 374px; top: 228px; width: 84px; height: 56px; padding-top: 10px; }
.available { left: 287px; top: 282px; width: 133px; height: 65px; padding-top: 12px; }
.interaction { left: 432px; top: 291px; width: 138px; height: 88px; padding-top: 15px; }
.shy { left: 34px; top: 313px; width: 178px; height: 66px; padding-top: 11px; }
.main {
    left: 178px;
    top: 127px;
    width: 176px;
    height: 79px;
    padding-top: 13px;
    border-color: #fff;
    background: #b8cce4;
    box-shadow: -8px 8px #c0c0c0;
    color: #1f497d;
    font-size: 13px;
    line-height: 20px;
}

/* scrollbar */
.scrollbar {
    display: flex;
    flex-direction: column;
    align-items: center;
    width: 18px;
    flex: none;
    background: #a8c6f0;
}
.splitter {
    width: 9px;
    height: 2px;
    margin: 2px 0;
    background: #3f4f70;
}
.ruler-toggle {
    width: 16px;
    height: 17px;
    display: flex;
    align-items: center;
    justify-content: center;
    border: 1px solid #8a94ad;
    background: #cfd3df;
}
.track {
    flex: 1;
    display: flex;
    flex-direction: column;
    align-items: center;
    justify-content: space-between;
    width: 14px;
    padding: 7px 0 4px;
    background: linear-gradient(90deg, #6c8fc2, #88a8d4);
}
.track .arrow {
    border-width: 4px;
    border-top-color: #3f4f70;
    border-bottom-width: 0;
}
.track .up {
    border-top-width: 0;
    border-bottom: 4px solid #3f4f70;
}
.thumb {
    width: 14px;
    height: 9px;
    border: 1px solid #7189b5;
    border-radius: 2px;
    background: linear-gradient(#fff, #c9d9f0);
    margin-bottom: 76px;
}
.nav {
    display: flex;
    height: 17px;
    align-items: center;
}

/* status bar */
.status {
    display: flex;
    align-items: center;
    height: 23px;
    flex: none;
    padding: 0 5px 0 0;
    color: #15316b;
    border-top: 1px solid #567db1;
    background: linear-gradient(#fff 1px, #d7e6f9 1px, #c7dcf8 35%, #b3d0f5 36%, #d7e5f7);
}
.cell {
    padding: 0 9px;
    line-height: 20px;
    border-right: 1px solid #a3c0e8;
    box-shadow: 1px 0 #fff;
}
.cell:first-child {
    padding-left: 8px;
}
.lang {
    display: flex;
    align-items: center;
    gap: 16px;
    padding-left: 8px;
}
.views {
    display: flex;
    margin-left: auto;
    border: 1px solid #9ebdea;
    border-radius: 2px;
    background: #c8dcf6;
}
.views button {
    width: 18px;
    height: 17px;
    display: flex;
    align-items: center;
    justify-content: center;
    border-right: 1px solid #b0c9ee;
}
.views .on {
    background: linear-gradient(#ffe3a8, #f8b44c);
}
.zoom {
    margin: 0 9px;
}
.round {
    width: 15px;
    height: 15px;
    border: 1px solid #6d84a8;
    border-radius: 50%;
    background: linear-gradient(#fff, #b9cceb);
    color: #445;
    font-weight: bold;
    line-height: 12px;
}
#zoom {
    appearance: none;
    width: 100px;
    height: 14px;
    margin: 0 2px;
    background: linear-gradient(#6d84a8, #6d84a8) 0 50% / 100% 1px no-repeat;
}
#zoom::-webkit-slider-thumb {
    appearance: none;
    width: 9px;
    height: 12px;
    border: 1px solid #5b739c;
    border-radius: 1px 1px 4px 4px;
    background: #e3ebf7;
}

/* taskbar */
.taskbar {
    display: flex;
    align-items: center;
    height: 30px;
    flex: none;
    color: #fff;
    background: linear-gradient(#a3acae 1px, #6b7a7d 1px, #465558 48%, #08191c 50%, #041012);
}
.orb {
    position: relative;
    z-index: 1;
    margin: -4px 0 0 9px;
}
.quick {
    display: flex;
    gap: 7px;
    align-items: center;
    margin: 0 13px 0 14px;
}
.tasks {
    display: flex;
    gap: 3px;
    flex: 1;
}
.tasks button {
    flex: 1;
    max-width: 150px;
    min-width: 0;
    height: 27px;
    display: flex;
    align-items: center;
    gap: 5px;
    padding: 0 9px;
    border: 1px solid #2a3638;
    border-radius: 3px;
    box-shadow: inset 0 0 0 1px #71807f;
    background: linear-gradient(#76807f, #414d4f 48%, #0a181a 50%, #101e20);
}
.tasks .pressed {
    background: linear-gradient(#2a3032, #14191a 48%, #000 50%);
    box-shadow: inset 0 0 0 1px #0a0f10;
}
.input-lang {
    margin: 0 16px 3px 12px;
}
.tray {
    display: flex;
    align-items: center;
    gap: 2px;
}
.tray .first {
    margin-left: 10px;
}
.tray time {
    margin: 0 13px 0 4px;
}
```
